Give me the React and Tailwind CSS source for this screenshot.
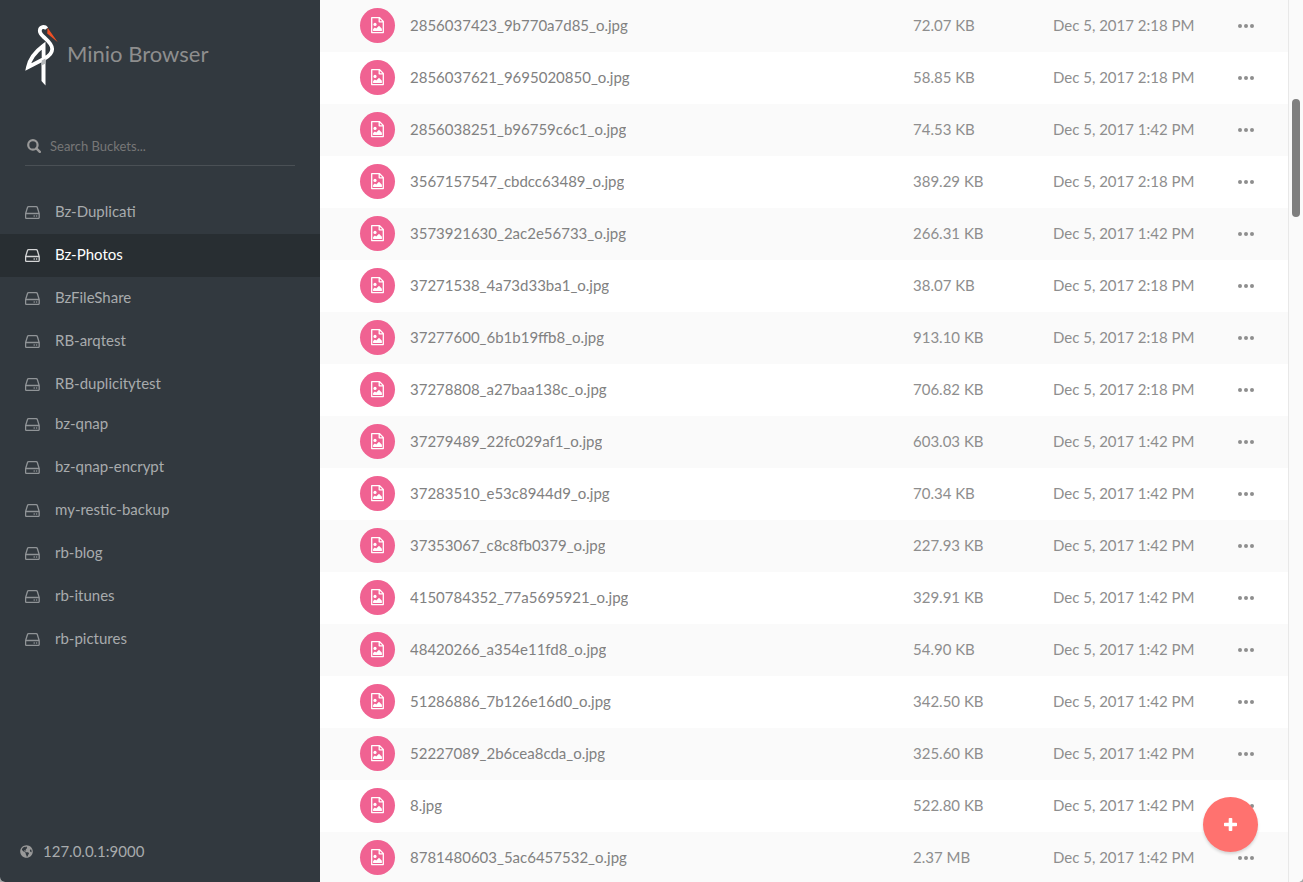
import { useState } from "react";
import clsx from "clsx";
import { FaGlobeAmericas } from "react-icons/fa";

const bucketGroups = [
  ["Bz-Duplicati", "Bz-Photos", "BzFileShare", "RB-arqtest", "RB-duplicitytest"],
  ["bz-qnap", "bz-qnap-encrypt", "my-restic-backup", "rb-blog", "rb-itunes", "rb-pictures"],
];

const files = [
  { name: "2856037423_9b770a7d85_o.jpg", size: "72.07 KB", modified: "Dec 5, 2017 2:18 PM" },
  { name: "2856037621_9695020850_o.jpg", size: "58.85 KB", modified: "Dec 5, 2017 2:18 PM" },
  { name: "2856038251_b96759c6c1_o.jpg", size: "74.53 KB", modified: "Dec 5, 2017 1:42 PM" },
  { name: "3567157547_cbdcc63489_o.jpg", size: "389.29 KB", modified: "Dec 5, 2017 2:18 PM" },
  { name: "3573921630_2ac2e56733_o.jpg", size: "266.31 KB", modified: "Dec 5, 2017 1:42 PM" },
  { name: "37271538_4a73d33ba1_o.jpg", size: "38.07 KB", modified: "Dec 5, 2017 2:18 PM" },
  { name: "37277600_6b1b19ffb8_o.jpg", size: "913.10 KB", modified: "Dec 5, 2017 2:18 PM" },
  { name: "37278808_a27baa138c_o.jpg", size: "706.82 KB", modified: "Dec 5, 2017 2:18 PM" },
  { name: "37279489_22fc029af1_o.jpg", size: "603.03 KB", modified: "Dec 5, 2017 1:42 PM" },
  { name: "37283510_e53c8944d9_o.jpg", size: "70.34 KB", modified: "Dec 5, 2017 1:42 PM" },
  { name: "37353067_c8c8fb0379_o.jpg", size: "227.93 KB", modified: "Dec 5, 2017 1:42 PM" },
  { name: "4150784352_77a5695921_o.jpg", size: "329.91 KB", modified: "Dec 5, 2017 1:42 PM" },
  { name: "48420266_a354e11fd8_o.jpg", size: "54.90 KB", modified: "Dec 5, 2017 1:42 PM" },
  { name: "51286886_7b126e16d0_o.jpg", size: "342.50 KB", modified: "Dec 5, 2017 1:42 PM" },
  { name: "52227089_2b6cea8cda_o.jpg", size: "325.60 KB", modified: "Dec 5, 2017 1:42 PM" },
  { name: "8.jpg", size: "522.80 KB", modified: "Dec 5, 2017 1:42 PM" },
  { name: "8781480603_5ac6457532_o.jpg", size: "2.37 MB", modified: "Dec 5, 2017 1:42 PM" },
];

const Logo = () => (
  <svg viewBox="0 0 34 62" className="h-[62px] w-[34px] shrink-0" aria-hidden="true">
    <path d="M16.5 36V57L20.5 61.5V33Z" fill="#fff" />
    <path
      d="M21.6 4.6C19.6 2 15 2.6 14.8 6.6C14.7 9.8 17.2 11.6 20 14.2C23.6 17.4 27.2 20.8 27.2 25C27.2 29.4 23.4 32.6 18.8 35L3 43.2C4.6 35.8 9.6 28.2 18.6 21.6V34"
      fill="none"
      stroke="#fff"
      strokeWidth="3.8"
      strokeMiterlimit="6"
    />
    <path d="M16.7 36.4L20.5 34.4V39.6L16.7 41.6Z" fill="#b5b8ba" />
    <path d="M22.6 3.8L32.6 18L22.2 9.4Z" fill="#f05024" />
  </svg>
);

const SearchIcon = () => (
  <svg viewBox="0 0 14 14" className="size-[14px]" aria-hidden="true">
    <circle cx="5.9" cy="5.9" r="4.7" fill="none" stroke="currentColor" strokeWidth="2.2" />
    <path d="M9.4 9.4L12.8 12.8" stroke="currentColor" strokeWidth="2.4" strokeLinecap="round" />
  </svg>
);

const DriveIcon = () => (
  <svg viewBox="0 0 15 13" className="h-[13px] w-[15px] shrink-0" aria-hidden="true">
    <path
      d="M0.6 7.6V11.4Q0.6 12.4 1.6 12.4H13.2Q14.2 12.4 14.2 11.4V7.6L12.4 1.7Q12.1 0.7 11.2 0.7H3.6Q2.7 0.7 2.4 1.7ZM0.8 7.5H14"
      fill="none"
      stroke="currentColor"
      strokeWidth="1.3"
    />
    <circle cx="9.2" cy="10" r="0.8" fill="currentColor" />
    <circle cx="11.6" cy="10" r="0.8" fill="currentColor" />
  </svg>
);

const ImageFileIcon = () => (
  <svg viewBox="0 0 13 17" className="h-[17px] w-[13px]" aria-hidden="true">
    <path
      d="M0.7 0.7H8.6L12.3 4.4V15.6H0.7ZM8.2 0.9V4.8H12.1"
      fill="none"
      stroke="currentColor"
      strokeWidth="1.3"
      strokeLinejoin="round"
    />
    <circle cx="4" cy="7.4" r="1.6" fill="currentColor" />
    <path d="M2.1 13.9V12L3.9 10.4L5.2 11.6L8 8.8L10.9 11.7V13.9Z" fill="currentColor" />
  </svg>
);

const DotsIcon = () => (
  <svg viewBox="0 0 16 4" className="h-1 w-4" fill="currentColor" aria-hidden="true">
    <circle cx="2" cy="2" r="2" />
    <circle cx="8" cy="2" r="2" />
    <circle cx="14" cy="2" r="2" />
  </svg>
);

const PlusIcon = () => (
  <svg viewBox="0 0 13 13" className="size-[13px]" aria-hidden="true">
    <path
      d="M5.5 0H7.5Q8.3 0 8.3 0.8V4.7H12.2Q13 4.7 13 5.5V7.5Q13 8.3 12.2 8.3H8.3V12.2Q8.3 13 7.5 13H5.5Q4.7 13 4.7 12.2V8.3H0.8Q0 8.3 0 7.5V5.5Q0 4.7 0.8 4.7H4.7V0.8Q4.7 0 5.5 0Z"
      fill="currentColor"
    />
  </svg>
);

const Sidebar = () => {
  const [selected, setSelected] = useState("Bz-Photos");

  return (
    <aside className="flex w-80 shrink-0 flex-col bg-[#32393f] text-[#a8abad]">
      <div className="flex items-center gap-2 px-[25px] pt-6">
        <Logo />
        <h1 className="pb-[2px] text-[22px] text-[#8e8e8e]">Minio Browser</h1>
      </div>

      <label className="mx-[25px] mt-10 flex h-10 items-center gap-2 border-b border-[#4a5055] px-[2px] text-[#999]">
        <SearchIcon />
        <input
          type="text"
          placeholder="Search Buckets..."
          aria-label="Search Buckets"
          className="min-w-0 flex-1 bg-transparent pl-px text-[13px] outline-none placeholder:text-[#777]"
        />
      </label>

      <nav className="mt-[25px]">
        {bucketGroups.map((buckets) => (
          <ul key={buckets[0]} className="not-first:-mt-[3px]">
            {buckets.map((bucket) => (
              <li key={bucket}>
                <a
                  href="#"
                  onClick={() => setSelected(bucket)}
                  className={clsx(
                    "flex h-[43px] items-center gap-[15px] px-[25px] pb-[3px]",
                    bucket === selected && "bg-[#282e32] text-white"
                  )}
                >
                  <span className="pt-[3px] opacity-80">
                    <DriveIcon />
                  </span>
                  {bucket}
                </a>
              </li>
            ))}
          </ul>
        ))}
      </nav>

      <div className="mt-auto flex items-center gap-[10px] px-5 pb-[21px]">
        <FaGlobeAmericas className="size-[13px] text-[#999]" />
        127.0.0.1:9000
      </div>
    </aside>
  );
};

const FileTable = () => (
  <table className="w-full table-fixed border-collapse text-left text-[#8e8e8e]">
    <colgroup>
      <col />
      <col className="w-[140px]" />
      <col className="w-[175px]" />
      <col className="w-[60px]" />
    </colgroup>
    <tbody>
      {files.map((file) => (
        <tr key={file.name} className="h-[52px] odd:bg-[#fafafa]">
          <td className="p-0 pb-px pl-10">
            <div className="flex items-center gap-[15px]">
              <span className="flex size-[35px] shrink-0 items-center justify-center rounded-full bg-[#f06292] text-white">
                <ImageFileIcon />
              </span>
              <a href="#" className="truncate pb-[2px] text-[#818181]">
                {file.name}
              </a>
            </div>
          </td>
          <td className="p-0 pb-[2px]">{file.size}</td>
          <td className="p-0 pb-[2px]">{file.modified}</td>
          <td className="p-0">
            <button type="button" aria-label={`Actions for ${file.name}`} className="flex h-6 items-center px-[10px]">
              <DotsIcon />
            </button>
          </td>
        </tr>
      ))}
    </tbody>
  </table>
);

const App = () => {
  return (
    <div className="h-screen bg-[#a8a8a8]">
      <div className="flex h-full overflow-hidden rounded-b-[5px] bg-white font-['Lato',sans-serif] text-[15px] leading-5">
        <Sidebar />
        <main className="min-w-0 flex-1 overflow-hidden">
          <FileTable />
        </main>
        {/* scroll track */}
        <div className="w-[15px] shrink-0 border-l border-[#e8e8e8] bg-[#fafafa] px-[3px] pt-[99px]">
          <div className="h-[118px] w-2 rounded-full bg-[#7f7f7f]" />
        </div>
      </div>

      <button
        type="button"
        aria-label="Add"
        className="fixed right-[45px] bottom-[30px] flex size-[55px] items-center justify-center rounded-full bg-[#ff726f] text-white shadow-[0_2px_3px_rgba(0,0,0,0.15)]"
      >
        <PlusIcon />
      </button>
    </div>
  );
};

export default App;
